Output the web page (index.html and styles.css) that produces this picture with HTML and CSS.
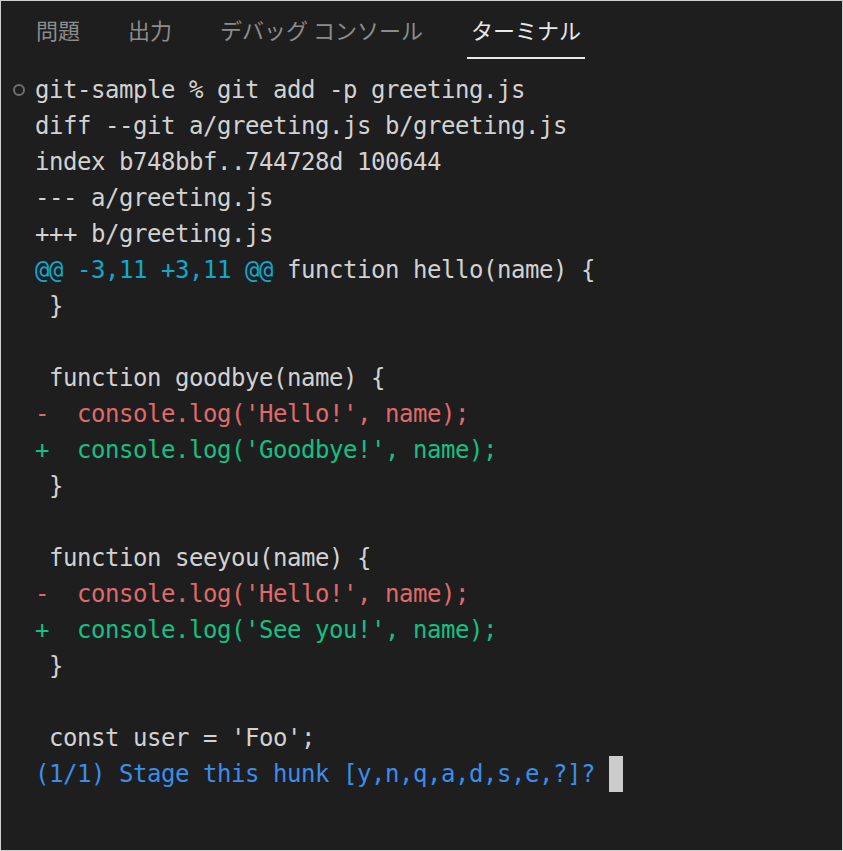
FILE: index.html
```html
<!DOCTYPE html>
<html lang="ja">
<head>
<meta charset="utf-8">
<title>Terminal</title>
<link rel="stylesheet" href="styles.css">
</head>
<body>
<div class="panel">
  <div class="tabs">
    <div class="tab">問題</div>
    <div class="tab">出力</div>
    <div class="tab">デバッグ コンソール</div>
    <div class="tab active">ターミナル</div>
  </div>
  <div class="terminal">
    <div class="line prompt"><span class="status"></span>git-sample % git add -p greeting.js</div>
    <div class="line">diff --git a/greeting.js b/greeting.js</div>
    <div class="line">index b748bbf..744728d 100644</div>
    <div class="line">--- a/greeting.js</div>
    <div class="line">+++ b/greeting.js</div>
    <div class="line"><span class="cyan">@@ -3,11 +3,11 @@</span> function hello(name) {</div>
    <div class="line"> }</div>
    <div class="line"> </div>
    <div class="line"> function goodbye(name) {</div>
    <div class="line red">-  console.log('Hello!', name);</div>
    <div class="line green">+  console.log('Goodbye!', name);</div>
    <div class="line"> }</div>
    <div class="line"> </div>
    <div class="line"> function seeyou(name) {</div>
    <div class="line red">-  console.log('Hello!', name);</div>
    <div class="line green">+  console.log('See you!', name);</div>
    <div class="line"> }</div>
    <div class="line"> </div>
    <div class="line"> const user = 'Foo';</div>
    <div class="line blue">(1/1) Stage this hunk [y,n,q,a,d,s,e,?]? <span class="cursor"> </span></div>
  </div>
</div>
</body>
</html>
```

FILE: styles.css
```css
html, body {
  margin: 0;
  padding: 0;
  background: #1e1e1e;
}

.panel {
  width: 843px;
  height: 851px;
  box-sizing: border-box;
  border: 1px solid #cfcfcf;
  background: #1e1e1e;
  overflow: hidden;
}

.tabs {
  display: flex;
  gap: 40px;
  padding-left: 31px;
  font-family: "Noto Sans CJK JP", "Noto Sans", sans-serif;
  font-size: 22px;
  line-height: 22px;
}

.tab {
  padding: 17px 4px 17px;
  color: #8c8c8c;
  border-bottom: 2px solid transparent;
  white-space: pre;
}

.tab.active {
  color: #e8e8e8;
  border-bottom-color: #e8e8e8;
}

.terminal {
  position: relative;
  padding: 13px 0 0 34px;
  font-family: "DejaVu Sans Mono", monospace;
  font-size: 24px;
  letter-spacing: -0.45px;
  line-height: 36px;
  color: #d2d2d2;
}

.line {
  white-space: pre;
  height: 36px;
}

.prompt {
  position: relative;
}

.status {
  position: absolute;
  left: -22px;
  top: 12px;
  width: 8px;
  height: 8px;
  border: 2px solid #6f6f6f;
  border-radius: 50%;
}

.cyan { color: #11a8cd; }
.red { color: #e06a6a; }
.green { color: #14c083; }
.blue { color: #3b8eea; }

.cursor {
  display: inline-block;
  width: 14px;
  height: 36px;
  vertical-align: top;
  background: #cccccc;
}
```
